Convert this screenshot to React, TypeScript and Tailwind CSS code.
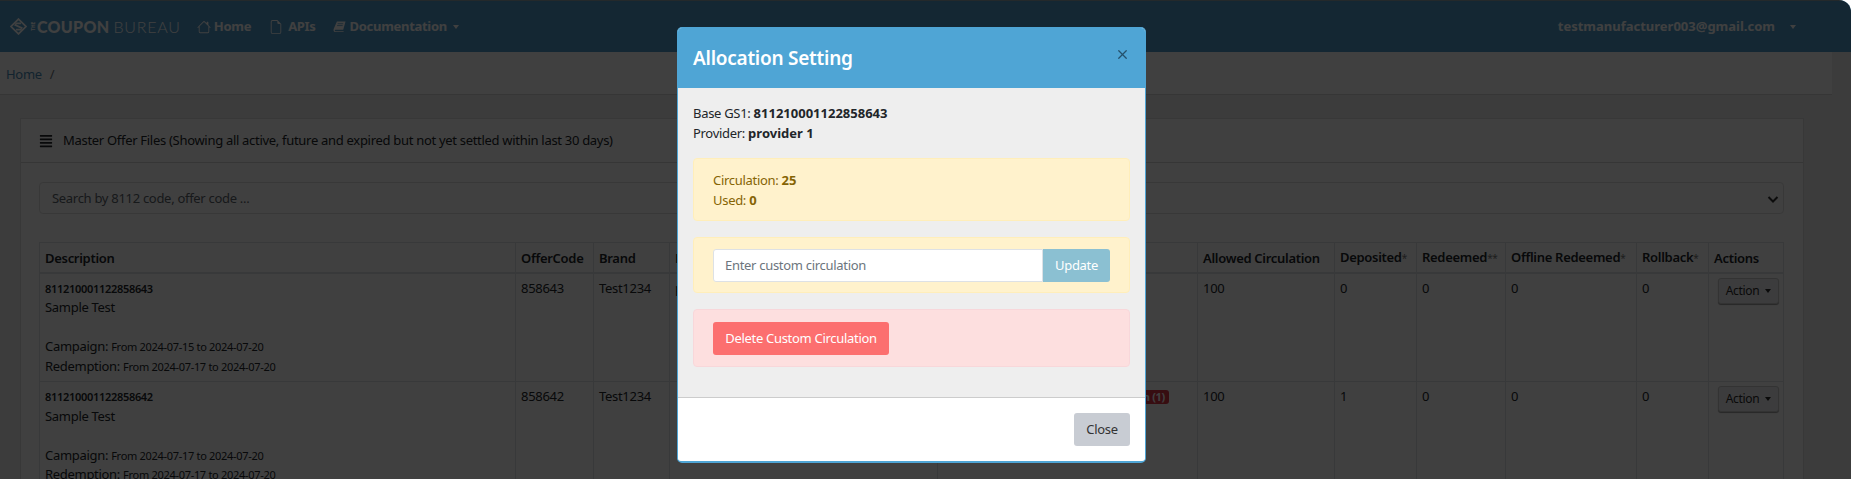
import { BsFileEarmark, BsHouse } from "react-icons/bs";
import { FaAlignJustify } from "react-icons/fa";
import { X } from "lucide-react";

const rows = [
  {
    code: "811210001122858643",
    offer: "858643",
    campaign: "From 2024-07-15 to 2024-07-20",
    redemption: "From 2024-07-17 to 2024-07-20",
    provider: "provider 1",
    badge: "",
    deposited: "0",
  },
  {
    code: "811210001122858642",
    offer: "858642",
    campaign: "From 2024-07-17 to 2024-07-20",
    redemption: "From 2024-07-17 to 2024-07-20",
    provider: "",
    badge: "Custom Circulation (1)",
    deposited: "1",
  },
];

const Caret = ({ gap = "ml-[6px]" }: { gap?: string }) => (
  <span className={`${gap} inline-block align-middle border-x-[3.5px] border-t-[4px] border-x-transparent border-t-current`} />
);

function Th({ children, star }: { children: string; star?: string }) {
  return (
    <th className="border border-[#dee2e6] border-b-2 px-[5px] pt-[2px] text-left font-semibold whitespace-nowrap">
      {children}
      {star && <span className="text-[10px] font-normal text-[#777]">{star}</span>}
    </th>
  );
}

function Navbar() {
  return (
    <header className="flex h-[52px] items-center justify-between border-t border-[#8fa3ad] bg-[#509ccc] pl-[10px] pr-[55px] text-white">
      <div className="flex items-center text-[13px] font-bold">
        <div className="flex items-center text-[#ffffff]">
          <svg width="17" height="17" viewBox="0 0 24 24" fill="none" stroke="currentColor" strokeWidth="2.4">
            <path d="M12 1.5 22.5 12 12 22.5 1.5 12Z" />
            <path d="M15.5 7.5 9 7.5 7.5 10 16.5 14 15 16.5 8.5 16.5" />
          </svg>
          <span className="ml-[3px] w-[6px] text-[5px] leading-[6px] font-bold [writing-mode:vertical-rl] rotate-180">THE</span>
          <span className="ml-[1px] font-['Lato',sans-serif] text-[16px] font-black tracking-[0.3px]">COUPON</span>
          <span className="ml-[4px] font-['Lato',sans-serif] text-[16px] font-light tracking-[0.8px]">BUREAU</span>
        </div>
        <a className="ml-[16px] flex items-center gap-[3px]"><BsHouse className="text-[14px]" />Home</a>
        <a className="ml-[18px] flex items-center gap-[5px]"><BsFileEarmark className="text-[14px]" />APIs</a>
        <a className="ml-[17px] flex items-center gap-[4px]">
          <svg width="13" height="13" viewBox="0 0 14 14" fill="currentColor">
            <path d="M4.2 1.5h9.3L11 10.6H2.6c-.9 0-1 1.4 0 1.4h9l-.3 1H2.2C.7 13 .3 11.4.7 9.8Z" />
            <path d="M5 4h6M4.4 6h6" stroke="#509ccc" strokeWidth="0.8" />
          </svg>
          Documentation
          <Caret gap="ml-[2px]" />
        </a>
      </div>
      <div className="text-[13px] font-bold tracking-normal">
        testmanufacturer003@gmail.com
        <span className="ml-[9px]"><Caret /></span>
      </div>
    </header>
  );
}

function OfferTable() {
  return (
    <table className="w-[1744px] table-fixed border-collapse text-[13px] leading-[19.5px] text-[#212529]">
      <colgroup>
        <col className="w-[476px]" />
        <col className="w-[78px]" />
        <col className="w-[76px]" />
        <col className="w-[268px]" />
        <col className="w-[260px]" />
        <col className="w-[137px]" />
        <col className="w-[82px]" />
        <col className="w-[89px]" />
        <col className="w-[131px]" />
        <col className="w-[72px]" />
        <col className="w-[75px]" />
      </colgroup>
      <thead>
        <tr className="h-[30px]">
          <Th>Description</Th>
          <Th>OfferCode</Th>
          <Th>Brand</Th>
          <Th>Provider</Th>
          <Th>Status</Th>
          <Th>Allowed Circulation</Th>
          <Th star="*">Deposited</Th>
          <Th star="**">Redeemed</Th>
          <Th star="*">Offline Redeemed</Th>
          <Th star="*">Rollback</Th>
          <Th>Actions</Th>
        </tr>
      </thead>
      <tbody>
        {rows.map((row) => (
          <tr key={row.code} className="h-[109px] align-top [&>td]:border [&>td]:border-[#dee2e6] [&>td]:px-[5px] [&>td]:py-[5px]">
            <td>
              <div className="text-[11px] font-semibold">{row.code}</div>
              <div>Sample Test</div>
              <div className="h-[19.5px]" />
              <div>Campaign: <span className="text-[11px]">{row.campaign}</span></div>
              <div>Redemption: <span className="text-[11px]">{row.redemption}</span></div>
            </td>
            <td>{row.offer}</td>
            <td>Test1234</td>
            <td>{row.provider}</td>
            <td className="text-right">
              {row.badge && (
                <span className="mr-[23px] inline-block rounded-[3px] bg-[#dc3545] px-[4px] text-[11px] leading-[14px] font-bold text-white">{row.badge}</span>
              )}
            </td>
            <td>100</td>
            <td>{row.deposited}</td>
            <td>0</td>
            <td>0</td>
            <td>0</td>
            <td className="!pt-[4px] !pl-[9px]">
              <button className="flex h-[26px] w-[61px] items-center justify-center rounded-[3px] border border-[#ccc] bg-[#eeeff1] text-[12px] text-[#2b2b2b] shadow-[0_1px_1px_rgba(0,0,0,0.4)]">
                Action<Caret />
              </button>
            </td>
          </tr>
        ))}
      </tbody>
    </table>
  );
}

function AllocationModal() {
  return (
    <div className="absolute top-[27px] left-[677px] w-[469px] overflow-hidden rounded-[5px] border border-b-2 border-[#4fa5d5] bg-[#eeeeee] text-[13px] leading-[19.5px] text-[#212529]">
      <div className="flex h-[60px] items-start justify-between bg-[#4fa5d5] pl-[15px] pr-[15px]">
        <h5 className="mt-[18px] text-[19px] leading-[24px] font-semibold tracking-[-0.25px] text-white">Allocation Setting</h5>
        <X className="mt-[19px] text-[#24506b]" size={15} strokeWidth={2} />
      </div>
      <div className="flex flex-col px-[15px] pt-[16px] pb-[30px]">
        <div>Base GS1: <b className="tracking-normal">811210001122858643</b></div>
        <div>Provider: <b className="tracking-normal">provider 1</b></div>
        <div className="mt-[15px] flex flex-col rounded-[4px] border border-[#ffeeba] bg-[#fff2cc] px-[19px] pt-[12px] pb-[10px] text-[#856404]">
          <div>Circulation: <b className="tracking-normal">25</b></div>
          <div>Used: <b className="tracking-normal">0</b></div>
        </div>
        <div className="mt-[16px] rounded-[4px] border border-[#ffeeba] bg-[#fff2cc] px-[19px] pt-[11px] pb-[10px]">
          <div className="flex h-[33px]">
            <input
              className="flex-1 rounded-l-[3px] border border-[#dde1e5] bg-white px-[11px] text-[13px] placeholder:text-[#6c757d]"
              placeholder="Enter custom circulation"
            />
            <button className="w-[67px] rounded-r-[3px] bg-[#8bc0d2] text-[13px] text-white">Update</button>
          </div>
        </div>
        <div className="mt-[16px] rounded-[4px] border border-[#f8d7da] bg-[#fddfdf] px-[19px] pt-[12px] pb-[11px]">
          <button className="h-[33px] w-[176px] rounded-[3px] bg-[#fc6f6f] text-[13px] text-white">Delete Custom Circulation</button>
        </div>
      </div>
      <div className="flex h-[64px] items-center justify-end border-t border-[#cccccc] bg-white px-[15px]">
        <button className="h-[33px] w-[56px] rounded-[3px] bg-[#c8ccd3] text-[13px] text-[#333]">Close</button>
      </div>
    </div>
  );
}

export default function App() {
  return (
    <div className="relative h-[479px] w-[1851px] overflow-hidden rounded-tr-[12px] bg-[#f0f0f0] font-['Noto_Sans',sans-serif] tracking-[-0.3px]">
      <Navbar />
      <div className="flex h-[43px] w-[1832px] items-center border-b border-[#d8d8d8] bg-white px-[6px] pt-[3px] text-[13px]">
        <a className="text-[#4a8cb8]">Home</a>
        <span className="ml-[8px] text-[#6c757d]">/</span>
      </div>
      <main className="pt-[23px] pl-[20px]">
        <section className="h-[500px] w-[1784px] border border-[#dfdfdf] bg-white">
          <div className="flex h-[44px] items-center gap-[10px] border-b border-[#d8d8d8] bg-white pr-[19px] pl-[18px] pt-[1px] text-[13px] text-[#212529]">
            <FaAlignJustify className="text-[14px]" />
            Master Offer Files (Showing all active, future and expired but not yet settled within last 30 days)
          </div>
          <div className="pt-[19px] pr-[19px] pl-[18px]">
            <div className="flex h-[32px] items-center justify-between rounded-[4px] border border-[#e0e0e0] px-[12px] pt-[1px] text-[13px] text-[#5c646c]">
              Search by 8112 code, offer code ...
              <svg width="12" height="12" viewBox="0 0 12 12" fill="none" stroke="#333" strokeWidth="2" className="-mr-[8px]">
                <path d="M1.5 4 6 8.5 10.5 4" />
              </svg>
            </div>
            <div className="mt-[28px]">
              <OfferTable />
            </div>
          </div>
        </section>
      </main>
      <div className="absolute inset-0 bg-black/75" />
      <AllocationModal />
    </div>
  );
}
